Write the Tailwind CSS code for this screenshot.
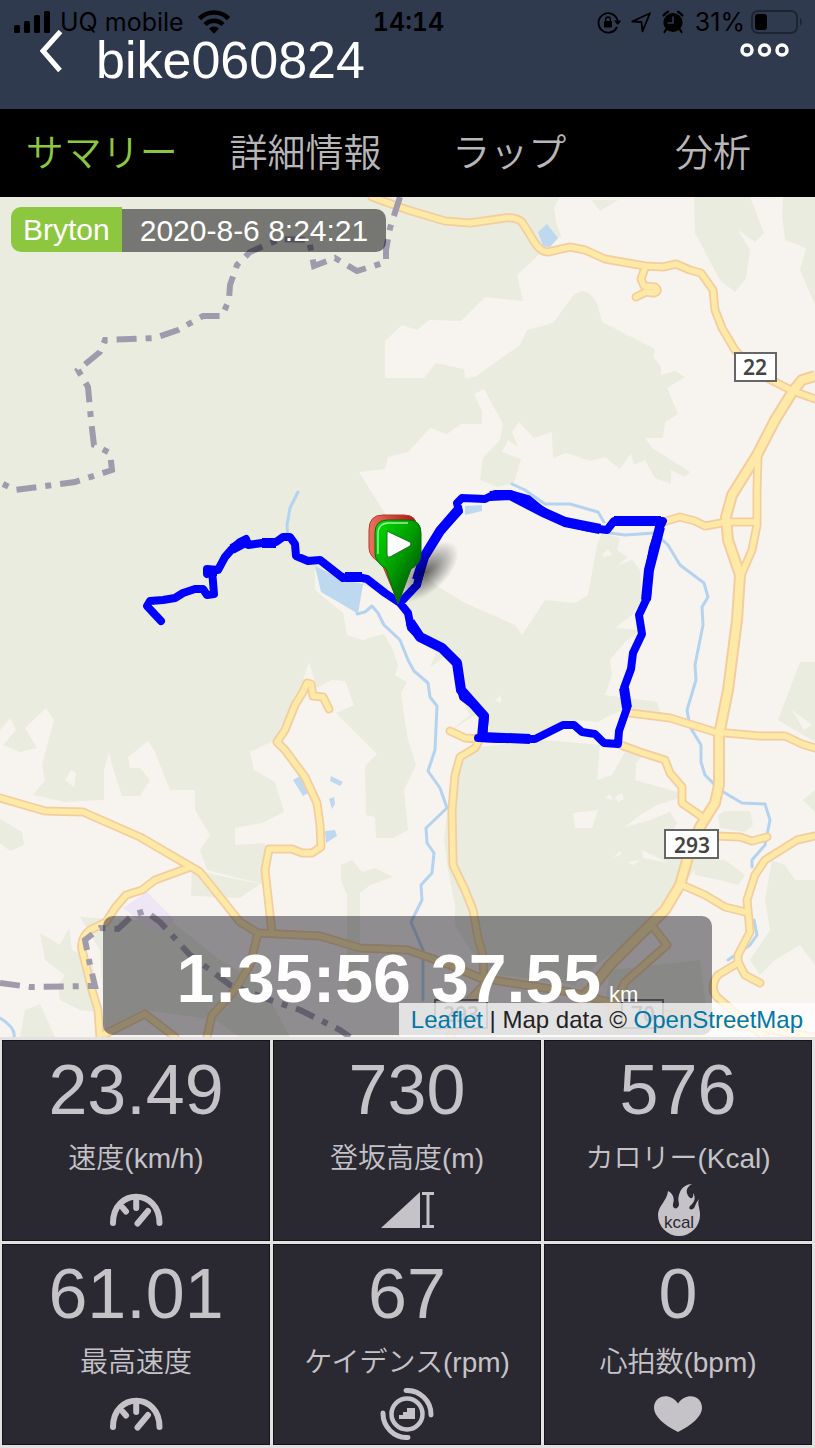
<!DOCTYPE html>
<html lang="ja">
<head>
    <meta charset="UTF-8" />
    <meta name="viewport" content="width=device-width, initial-scale=1.0" />
    <title>bike060824</title>
    <script src="https://cdn.jsdelivr.net/npm/@tailwindcss/browser@4"></script>
    <style>
        body { font-family: 'Liberation Sans', 'Noto Sans CJK JP', sans-serif; }
    </style>
</head>
<body class="bg-[#e4e2e0] min-h-screen flex flex-col">

<header class="relative bg-[#2f3a4f] text-white pt-[30px] pb-[19px] pl-10 pr-[26px]">
    <!-- status bar -->
    <div class="absolute inset-x-0 top-0 h-11 pl-[14px] pr-3 grid grid-cols-[1fr_auto_1fr] items-center text-black text-[25px] leading-[44px] font-['Inter']">
        <div class="flex items-center gap-[10px]">
            <svg class="w-9 h-6" viewBox="0 0 36 24" aria-hidden="true">
                <rect x="0" y="15" width="6" height="8" rx="1.5"/>
                <rect x="10" y="11" width="6" height="12" rx="1.5"/>
                <rect x="20" y="5" width="6" height="18" rx="1.5"/>
                <rect x="30" y="1" width="6" height="22" rx="1.5"/>
            </svg>
            <span>UQ mobile</span>
            <svg class="w-8 h-6 ml-1" viewBox="0 0 32 24" aria-hidden="true">
                <path d="M1.500 8.500a20.500 20.500 0 0 1 29 0" fill="none" stroke="#000" stroke-width="4.600"/>
                <path d="M7 14.500a12.700 12.700 0 0 1 18 0" fill="none" stroke="#000" stroke-width="4.400"/>
                <path d="M11 18.500a7 7 0 0 1 10 0L16 23.700z"/>
            </svg>
        </div>
        <div class="font-semibold tabular-nums">14:14</div>
        <div class="flex items-center justify-end gap-[10px]">
            <svg class="w-6 h-6" viewBox="0 0 24 24" aria-hidden="true">
                <path d="M20 17a9.700 9.700 0 1 1 0.700-6" fill="none" stroke="#000" stroke-width="1.800"/>
                <path d="M17 10.500h7.500L20.700 15z"/>
                <rect x="7" y="11" width="8" height="6.500" rx="1"/>
                <path d="M8.700 11V9.300a2.300 2.300 0 0 1 4.600 0V11" fill="none" stroke="#000" stroke-width="1.400"/>
            </svg>
            <svg class="w-5 h-6" viewBox="0 0 20 24" aria-hidden="true">
                <path d="M1.200 11.500L19 3.200L11.500 21.300L10.500 12z" fill="none" stroke="#000" stroke-width="1.800" stroke-linejoin="round"/>
            </svg>
            <svg class="w-6 h-6" viewBox="0 0 24 24" aria-hidden="true">
                <circle cx="12" cy="12.500" r="9.600"/>
                <path d="M2.500 5.500a14 14 0 0 1 4.500-3.800M21.500 5.500a14 14 0 0 0-4.500-3.800M5.500 19l-2 3M18.500 19l2 3" stroke="#000" stroke-width="2.200" stroke-linecap="round" fill="none"/>
                <path d="M12 6.500v6.500H6.500" stroke="#2f3a4f" stroke-width="1.600" fill="none"/>
            </svg>
            <span>31%</span>
            <svg class="w-[52px] h-6 -ml-1" viewBox="0 0 52 24" aria-hidden="true">
                <rect x="1" y="1" width="45" height="22" rx="6" fill="none" stroke="#1d2431" stroke-width="2"/>
                <rect x="4" y="4" width="12" height="16" rx="3"/>
                <path d="M49 8a5 5 0 0 1 0 8z" fill="#1d2431"/>
            </svg>
        </div>
    </div>

    <div class="relative flex items-start">
        <button type="button" aria-label="戻る" class="w-6 h-11">
            <svg class="w-6 h-11" viewBox="0 0 24 44"><path d="M20.500 1.500L3 21L20 40.500" fill="none" stroke="#fff" stroke-width="5"/></svg>
        </button>
        <h1 class="ml-8 text-[52px] leading-[60px]">bike060824</h1>
        <button type="button" aria-label="メニュー" class="ml-auto h-10 flex items-center">
            <svg class="w-[50px] h-4" viewBox="0 0 50 16" fill="none" stroke="#fff" stroke-width="3.500">
                <circle cx="8" cy="8" r="5"/><circle cx="25.500" cy="8" r="5"/><circle cx="43" cy="8" r="5"/>
            </svg>
        </button>
    </div>
</header>

<nav class="bg-black text-[#b8b6b8] text-[38px] leading-[88px] font-[350] grid grid-cols-4 text-center">
    <a href="#summary" class="text-[#8dc73f]">サマリー</a>
    <a href="#detail">詳細情報</a>
    <a href="#lap">ラップ</a>
    <a href="#analysis">分析</a>
</nav>

<main id="summary">
    <section class="relative overflow-hidden">
        <svg class="block w-full" viewBox="0 197 815 840" role="img" aria-label="ルート地図">
            <defs>
                <g id="roads" fill="none" stroke-linejoin="round" stroke-linecap="round">
                    <path d="M372 197L408 210L445 221L470 223L505 218Q516 217 522 222L535 243Q541 252 548 252L570 247L585 250L605 259L645 266L663 267L676 264L690 270L701 273L713 290L715 310L722 328L735 350L755 372L793 391L815 399"/>
                    <path d="M645 268L641 279L644 286L655 287Q660 291 654 293L646 292L636 297"/>
                    <path d="M663 522L680 517L695 521L705 526L727 522L755 522"/>
                    <path d="M630 713L670 718L715 732L760 736L785 736L802 744L815 748"/>
                    <path d="M618 744L640 752L665 760L670 773L682 787L682 803L705 819"/>
                    <path d="M450 731L465 738L480 739L475 748L460 757L455 775L452 810L453 865L465 890L473 910L478 938L483 955L484 985L465 1005L450 1037"/>
                    <path d="M680 884L705 895L725 907L745 912"/>
                    <path d="M715 836L740 837L752 841L767 837"/>
                    <path d="M815 836L797 840L765 860L755 875L747 900L750 932L738 955L738 963L718 975Q709 987 717 997L740 1017L765 1037"/>
                    <path d="M738 962L745 975L760 983"/>
                    <path d="M653 927L667 945L625 982L612 1010"/>
                    <path d="M0 798L45 811L83 812L140 837L200 872L240 922L258 933L320 936L360 948L408 950L450 965L480 978L570 992L640 1010L815 1037"/>
                    <path d="M188 868L155 880L142 890L126 895L115 908L106 922L90 930Q80 938 82 950L92 990L98 1010L100 1037"/>
                    <path d="M105 1034L145 1014L175 1037"/>
                    <path d="M258 933L250 965L235 990L212 1015L207 1037"/>
                    <path d="M272 933L265 870L269 849L292 849L302 853L312 853L321 847L320 825L317 803L305 777L285 750L277 742L285 730L295 705L303 692L307 683L311 684L313 696L323 697L329 709"/>
                    <path d="M758 455L757 490L757 525L752 550L740 578"/>
                </g>
                <path id="highway" fill="none" stroke-linejoin="round" d="M815 376L802 380L793 391L775 420L757 455L732 495L726 517L728 540L740 575L737 620L728 690L719 735L719 785L715 803L700 827L690 850L680 885L665 910L640 935L610 965L590 990L575 1003"/>
                <path id="route" fill="none" stroke-linejoin="round" stroke-linecap="round" d="M161 621L147 606L150 601L163 600L175 598L183 593L195 589L203 589L207 595L214 594L212 570L207 574L207 569L218 570L225 557L232 549L240 542L246 539L248 545L262 543L276 542L283 537L290 537L295 544L296 556L308 561L320 560L343 578L353 576L367 579L385 593L400 603L408 613L411 628L420 637L442 648L457 662L460 685L463 697L475 706L485 716L483 738L478 738L500 739L535 739L555 729L563 725L574 725L582 732L595 734L604 743L618 744L619 731L627 708L624 688L631 669L633 653L642 634L639 615L647 598L649 570L653 548L660 527L663 521L614 521L607 530L590 528L565 522L545 513L528 499L510 494L495 494L485 499L462 498L457 503L459 511L440 531L424 557L417 585L400 603"/>
                <linearGradient id="pin" x1="0" y1="0" x2="1" y2="1">
                    <stop offset="0" stop-color="#00e000"/><stop offset="0.500" stop-color="#009a00"/><stop offset="1" stop-color="#003c00"/>
                </linearGradient>
                <linearGradient id="pinRed" x1="0" y1="0" x2="1" y2="0">
                    <stop offset="0" stop-color="#f07060"/><stop offset="1" stop-color="#b01010"/>
                </linearGradient>
                <radialGradient id="shade">
                    <stop offset="0" stop-color="#000" stop-opacity="0.600"/><stop offset="1" stop-color="#000" stop-opacity="0"/>
                </radialGradient>
            </defs>

            <rect x="0" y="197" width="815" height="840" fill="#f7f4ef"/>

            <!-- woods -->
            <g fill="#e9ecdf">
                <path d="M0 197H560L554 208L556 222L561 236L544 250L517 275L523 301L485 297L461 321L429 320L417 330L402 325L385 341V378H424L436 363L464 369L465 378L475 377L520 345L527 330L553 323L573 296Q586 284 597 303L602 322L655 349L653 357L661 366V375L675 371L685 377L667 388L678 414L665 422L663 438L645 438L652 448L690 472L685 477L671 470V484L655 478L645 460L634 465L631 453L620 469L605 457L590 461L566 453L553 458L552 432L534 438L519 422L512 432L518 447L508 440L502 452L521 459L514 483L497 487L480 480L483 458L500 440L503 424L484 389L474 394L482 411V424H461L447 434L430 428L408 452L388 457L385 469L359 472L384 512L400 530V600L363 585L315 570V590L343 613L347 635L363 640L384 634L393 650L398 665L395 675L407 682L401 693L404 715L408 740L416 765L404 790L408 830L393 838H376L375 817L366 815L365 766L377 754L336 713L354 705L345 681L332 680L317 688L309 662L300 690L275 740L250 752L254 770L275 782L284 812L262 823L235 828V845L265 843L262 884L207 870L200 850L210 835L195 810V790L170 790L155 752L148 741L128 757L130 768L140 768L150 780L140 796H122L112 765L109 752L104 770V800L65 802L33 795L45 780L42 765L54 720L46 708L25 728L37 748L20 752L3 745L16 730L10 718L0 730z"/>
                <path d="M592 200H618L600 211zM694 197H750L764 233L755 242L738 230L750 250L746 278L735 292L720 280L695 233zM783 197H815V305L800 270L806 248L785 240L782 215z"/>
                <path d="M404 600L425 575L440 588L465 603L515 625L522 635L545 600L575 603L588 595L597 545L602 533L620 538L617 550L632 560L640 570L642 600L632 615L615 628L640 630L625 642L610 660L612 675L605 695L657 702L660 712L625 710L610 715L598 722L570 720L540 735L485 733L480 712L450 731L470 715L462 700L455 665L448 655L430 667L436 653z"/>
                <path d="M470 748L545 740L600 745L597 780L612 775L626 750L636 765L635 780L680 793V798L657 805L640 815L625 827L650 820L670 812L677 823L670 835L700 862L680 890L645 930L600 962L575 985L500 975L470 950L455 925L455 905L448 870L444 840L450 790zM630 752L648 750L628 772L617 770z"/>
                <path d="M718 815L725 811H750L753 825L745 832L720 828zM695 858L725 860L745 875L738 885L720 880L695 875zM815 662V742L778 720L800 662zM772 860L785 865L795 880L815 880V965L800 945L775 960L760 975L750 960L770 930L765 900zM803 800L815 790V812z"/>
                <path d="M0 819L22 832L24 845L10 851L0 843zM341 865L352 860L362 872L375 868L393 877L370 885L360 893V1000H347V895L341 880zM192 862L207 873L260 884L240 898L191 896z"/>
                <path d="M40 933L60 945L69 928L72 950L92 960L100 1012L80 1010L60 1000L58 985L65 975L45 960zM80 917L130 920L170 920L220 960L262 985L290 1037H240L215 1020L145 1010L105 1030L100 950zM25 1010L40 1004L55 1037H20zM610 970L700 960L710 1037H600z"/>
            </g>
            <g fill="#f7f4ef">
                <path d="M573 813L598 810L592 828H575zM605 798l5-4l3 6zM615 797l7-4l2 6l-6 3zM65 780l6-10l5 3l-2 14zM495 700l6-5v8zM602 555l6-6l4 6l-8 2zM618 565l15-12h9l-12 8z"/>
                <path d="M613 858l7-7l2 3zM627 862l14-2l-8 5zM642 850l26 13l-25-5zM792 710l20 15l-8 5z"/>
            </g>
            <path d="M123 908L147 892L175 920L155 932z" fill="#eee5f5"/>

            <!-- water -->
            <path fill="#bdd8ef" d="M538 232L547 224L558 238L550 247L543 246zM315 566L343 580L363 584L358 614L345 606L321 592zM465 506L482 505V511L465 515zM293 780L300 776L308 793L303 796zM331 776L343 782L340 786L330 781zM329 799L334 797L335 804L332 809zM325 831L335 830L337 836L326 843z"/>
            <g fill="none" stroke="#b3d3f0" stroke-width="3" stroke-linejoin="round" stroke-linecap="round">
                <path d="M298 492L290 508L287 525L288 540"/>
                <path d="M357 614L365 612L372 606L378 613L384 625L400 640L408 660L414 671L428 683L430 697L437 706L435 750L428 771L440 788L447 808L426 828L427 843L434 853L432 873L421 885L422 900L411 922L423 950V1000"/>
                <path d="M512 484L525 490L545 504L570 504L598 512L604 522M610 533L625 535L655 533L668 545L680 565L704 583L708 597L702 607L703 625L695 665L696 680L687 710L690 727L701 745V762L705 775L720 790L742 803L765 804L770 820L765 845L752 860V867M754 920L757 935L750 945L728 960"/>
                <path d="M0 1018Q16 1028 14 1037"/>
            </g>

            <!-- roads -->
            <use href="#roads" stroke="#f3cd9d" stroke-width="9"/>
            <use href="#highway" stroke="#f3cd9d" stroke-width="12"/>
            <use href="#roads" stroke="#ffe9a6" stroke-width="5.500"/>
            <use href="#highway" stroke="#ffe9a6" stroke-width="8"/>

            <!-- prefecture border -->
            <g fill="none" stroke="#9f9bad" stroke-width="6" stroke-dasharray="20 9 6 9">
                <path d="M400 197L390 228L386 250V262L357 271L335 258L314 266L309 240L280 239L250 252L237 265L230 285L229 300L222 316H203L178 330L155 338L105 340L100 352L78 370L88 387L91 420L94 445L110 453L112 470L75 482L15 490L3 484"/>
                <path d="M0 983L30 987L95 986L90 965L85 940L100 928L118 929L133 915L145 911L160 922L190 955L230 985L270 1000L300 1010L340 1030L350 1037"/>
            </g>

            <!-- road shields -->
            <g font-family="Noto Sans, sans-serif" font-size="21" font-weight="600" text-anchor="middle" fill="#444">
                <rect x="735" y="353" width="41" height="28" fill="#fff" stroke="#666" stroke-width="2"/>
                <text x="755" y="375">22</text>
                <rect x="665" y="830" width="53" height="28" fill="#fff" stroke="#666" stroke-width="2"/>
                <text x="692" y="853">293</text>
                <rect x="435" y="1000" width="52" height="28" fill="#fff" stroke="#666" stroke-width="2"/>
                <text x="461" y="1022">293</text>
                <rect x="622" y="1000" width="41" height="28" fill="#fff" stroke="#666" stroke-width="2"/>
                <text x="643" y="1022">70</text>
            </g>

            <use href="#route" stroke="#0000ff" stroke-width="8"/>
            <path d="M208 571H217M232 549L247 541M262 543H276M345 577H362M410 622L420 637L442 648L457 663L461 690L484 716L482 737L530 739M459 509L440 531L424 557L417 580M490 496L510 495L545 513L565 522L600 529M614 521H661M660 527L649 570L646 600M624 688L627 708" fill="none" stroke="#0000ff" stroke-width="10" stroke-linejoin="round"/>

            <!-- start and finish pins -->
            <ellipse cx="426" cy="572" rx="40" ry="20" fill="url(#shade)" transform="rotate(-42 426 572)"/>
            <path d="M383 515H404Q417 515 417 528V548Q417 560 407 564L397 600L382 564Q369 557 369 548V530Q369 515 383 515z" fill="url(#pinRed)" stroke="#a04030" stroke-width="1"/>
            <path d="M388 520H408Q421 520 421 533V553Q421 564 411 569L398 604L386 569Q375 562 375 553V533Q375 520 388 520z" fill="url(#pin)" stroke="#0a6a0a" stroke-width="1"/>
            <path d="M378 554V534Q378 523 389 523H408" fill="none" stroke="#9df09d" stroke-width="1.500"/>
            <path d="M389 532Q387 530 387 533V555Q387 558 390 557L410 546Q412 544 410 542z" fill="#fff" stroke="#2a6a2a" stroke-width="1"/>
        </svg>

        <div class="absolute left-[11px] top-[10px] flex items-end text-white text-[30px]">
            <span class="bg-[#8dc73f] rounded-l-[10px] px-3 leading-[45px]">Bryton</span>
            <span class="bg-[#040208]/50 rounded-r-[10px] px-[18px] leading-[43px]">2020-8-6 8:24:21</span>
        </div>

        <div class="absolute inset-x-[103px] bottom-[2px] h-[119px] rounded-[10px] bg-[#282630]/50 text-white flex items-baseline justify-center pt-[20px]">
            <span class="text-[68px] leading-[84px] font-bold">1:35:56</span>
            <span class="ml-5 text-[68px] leading-[84px] font-bold">37.55</span>
            <span class="ml-2 text-[22px]">km</span>
        </div>

        <div class="absolute right-0 bottom-0 bg-white/75 text-[#222] text-[24px] leading-[34px] px-3 whitespace-nowrap">
            <a href="#leaflet" class="text-[#0078a8]">Leaflet</a> | Map data © <a href="#osm" class="text-[#0078a8]">OpenStreetMap</a>
        </div>
    </section>

    <section class="grid grid-cols-3 gap-[3px] pt-[3px] pb-[3px] pl-[2px] pr-[3px] text-center text-[#c5c3c8]">
        <div class="bg-[#2a2932] border border-[#15141c] pb-1 flex flex-col items-center">
            <div class="text-[70px] leading-[98px]">23.49</div>
            <div class="text-[28px] leading-[40px] font-[350]">速度(km/h)</div>
            <svg class="w-14 h-[52px] mt-[5px]" viewBox="0 0 56 52" fill="none" stroke="currentColor" stroke-width="6" stroke-linecap="round" aria-hidden="true">
                <path d="M5 39C5 4 51.500 4 51.500 39"/><path d="M28.200 14V24M15 24L18 27.500M40 27L29.500 39.500"/>
            </svg>
        </div>
        <div class="bg-[#2a2932] border border-[#15141c] pb-1 flex flex-col items-center">
            <div class="text-[70px] leading-[98px]">730</div>
            <div class="text-[28px] leading-[40px] font-[350]">登坂高度(m)</div>
            <svg class="w-14 h-[52px] mt-[5px]" viewBox="0 0 56 52" aria-hidden="true">
                <path d="M2 44L41 8V44z" fill="currentColor"/><path d="M43 9.500H55M43 42.500H55M49 9V43" stroke="currentColor" stroke-width="3"/>
            </svg>
        </div>
        <div class="bg-[#2a2932] border border-[#15141c] pb-1 flex flex-col items-center">
            <div class="text-[70px] leading-[98px]">576</div>
            <div class="text-[28px] leading-[40px] font-[350]">カロリー(Kcal)</div>
            <svg class="w-14 h-[52px] mt-[5px]" viewBox="0 0 56 52" aria-hidden="true">
                <path d="M42 0C35 4 36 9 39 13C42 16 44 13 43 9C46 13 45 18 40 22C37 26 44 27 45 22C46 20 47 17 49 15C47 20 50 24 50 31A21 21 0 0 1 8 31C8 22 17 17 18 7C23 9 25 15 23 20C22 24 27 27 29 21C29 17 27 15 30 8C32 3 37 0 42 0z" fill="currentColor"/>
                <text x="29" y="44" font-size="17" text-anchor="middle" fill="#2a2932">kcal</text>
            </svg>
        </div>
        <div class="bg-[#2a2932] border border-[#15141c] pb-1 flex flex-col items-center">
            <div class="text-[70px] leading-[98px]">61.01</div>
            <div class="text-[28px] leading-[40px] font-[350]">最高速度</div>
            <svg class="w-14 h-[52px] mt-[5px]" viewBox="0 0 56 52" fill="none" stroke="currentColor" stroke-width="6" stroke-linecap="round" aria-hidden="true">
                <path d="M5 39C5 4 51.500 4 51.500 39"/><path d="M28.200 14V24M15 24L18 27.500M40 27L29.500 39.500"/>
            </svg>
        </div>
        <div class="bg-[#2a2932] border border-[#15141c] pb-1 flex flex-col items-center">
            <div class="text-[70px] leading-[98px]">67</div>
            <div class="text-[28px] leading-[40px] font-[350]">ケイデンス(rpm)</div>
            <svg class="w-14 h-[52px] mt-[5px]" viewBox="0 0 56 52" fill="none" stroke="currentColor" stroke-linecap="round" aria-hidden="true">
                <circle cx="28" cy="26" r="15.500" stroke-width="4.500"/>
                <path d="M27 2.500A24 24 0 0 1 52 27M4 25A24 24 0 0 0 29 49.500" stroke-width="5"/>
                <path d="M20 31V27H24V24H28V20H36V31z" fill="currentColor" stroke="none"/>
            </svg>
        </div>
        <div class="bg-[#2a2932] border border-[#15141c] pb-1 flex flex-col items-center">
            <div class="text-[70px] leading-[98px]">0</div>
            <div class="text-[28px] leading-[40px] font-[350]">心拍数(bpm)</div>
            <svg class="w-14 h-[52px] mt-[5px]" viewBox="0 0 56 52" fill="currentColor" aria-hidden="true">
                <path d="M28 44C14 37 4 28 4 20C4 7 20 4 28 15.500C36 4 52 7 52 20C52 28 42 37 28 44z"/>
            </svg>
        </div>
    </section>
</main>

</body>
</html>
